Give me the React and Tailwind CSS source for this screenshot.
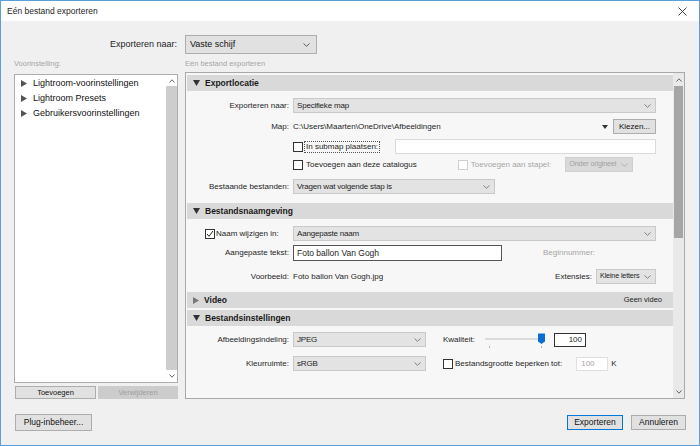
import React from 'react';

const Chevron = ({ color = '#777' }) => (
  <svg width="7" height="4" viewBox="0 0 7 4" className="shrink-0">
    <path d="M0.5 0.5 L3.5 3.3 L6.5 0.5" fill="none" stroke={color} strokeWidth="0.9" />
  </svg>
);

const Down = ({ color = '#333' }) => (
  <svg width="7" height="6" viewBox="0 0 7 6" className="shrink-0">
    <path d="M0 0 H7 L3.5 6 Z" fill={color} />
  </svg>
);

const Right = ({ color = '#555' }) => (
  <svg width="6" height="7" viewBox="0 0 6 7" className="shrink-0">
    <path d="M0 0 V7 L6 3.5 Z" fill={color} />
  </svg>
);

const Select = ({ text, className = '', disabled, small }) => (
  <div
    className={`h-[15px] flex items-center justify-between pl-[3px] pr-[4px] border whitespace-nowrap overflow-hidden ${
      disabled ? 'bg-[#d9d9d9] border-[#d0d0d0] text-[#a3a3a3]' : 'bg-[#e3e3e3] border-[#c9c9c9] text-[#1e1e1e]'
    } ${small ? 'text-[7.3px]' : ''} ${className}`}
  >
    <span className="tracking-[-0.2px]">{text}</span>
    <Chevron color={disabled ? '#b0b0b0' : '#777'} />
  </div>
);

const Checkbox = ({ checked, disabled }) => (
  <div
    className={`w-[10px] h-[10px] shrink-0 bg-white border flex items-center justify-center ${
      disabled ? 'border-[#cfcfcf]' : 'border-[#333]'
    }`}
  >
    {checked && (
      <svg width="8" height="8" viewBox="0 0 8 8">
        <path d="M1 4 L3 6.3 L7 1" fill="none" stroke="#222" strokeWidth="1" />
      </svg>
    )}
  </div>
);

const Header = ({ title, open = true, right }) => (
  <div className="h-[16px] bg-[#d9d9d9] flex items-center pl-[6px] pr-[11px] gap-[5px]">
    {open ? <Down /> : <Right color="#777" />}
    <span className="font-bold text-[8.5px] text-[#1a1a1a]">{title}</span>
    {right && <span className="ml-auto text-[7.5px] text-[#222]">{right}</span>}
  </div>
);

const Label = ({ children }) => (
  <div className="w-[106px] shrink-0 text-right pr-[4px]">{children}</div>
);

const WinButton = ({ children, className = '', disabled }) => (
  <div
    className={`flex items-center justify-center border whitespace-nowrap ${
      disabled ? 'bg-[#cccccc] border-[#cccccc] text-[#a0a0a0]' : 'bg-[#e1e1e1] border-[#adadad] text-[#111]'
    } ${className}`}
  >
    {children}
  </div>
);

export default function App() {
  return (
    <div
      className="w-[700px] h-[446px] border border-[#5b9fd8] bg-[#f0f0f0] flex flex-col text-[#1e1e1e]"
      style={{ fontFamily: '"Liberation Sans", Arial, sans-serif' }}
    >
      {/* title bar */}
      <div className="h-[20px] shrink-0 bg-white flex items-center pl-[6px] pr-[12px] text-[8.5px]">
        <span>Eén bestand exporteren</span>
        <svg width="9" height="9" viewBox="0 0 9 9" className="ml-auto">
          <path d="M0.5 0.5 L8.5 8.5 M8.5 0.5 L0.5 8.5" stroke="#333" strokeWidth="0.9" />
        </svg>
      </div>

      {/* destination */}
      <div className="flex items-center mt-[14px] text-[9px]">
        <div className="w-[176px] text-right">Exporteren naar:</div>
        <WinButton className="ml-[8px] w-[132px] h-[19px] !justify-between pl-[4px] pr-[6px]">
          <span>Vaste schijf</span>
          <Chevron color="#555" />
        </WinButton>
      </div>

      <div className="flex mt-[5px] h-[10px] items-center text-[7.5px] text-[#a6a6a6] pl-[13px] gap-[7px]">
        <div className="w-[164px]">Voorinstelling:</div>
        <div>Eén bestand exporteren</div>
      </div>

      {/* main */}
      <div className="flex h-[327px] mt-[3px] pl-[13px] gap-[7px]">
        {/* presets */}
        <div className="w-[164px] pt-[2px] flex flex-col">
          <div className="h-[309px] bg-white border border-[#adadad] flex">
            <div className="flex-1 pt-[1px] pl-[6px] text-[9px] text-[#111]">
              {['Lightroom-voorinstellingen', 'Lightroom Presets', 'Gebruikersvoorinstellingen'].map((t) => (
                <div key={t} className="h-[15px] flex items-center gap-[6px]">
                  <Right />
                  <span>{t}</span>
                </div>
              ))}
            </div>
            <div className="w-[11px] flex flex-col">
              <div className="h-[11px] flex items-center justify-center">
                <svg width="6" height="4" viewBox="0 0 6 4">
                  <path d="M0.5 3.5 L3 0.8 L5.5 3.5" fill="none" stroke="#555" strokeWidth="0.9" />
                </svg>
              </div>
              <div className="flex-1 bg-[#cdcdcd]" />
              <div className="h-[12px] flex items-center justify-center">
                <svg width="6" height="4" viewBox="0 0 6 4">
                  <path d="M0.5 0.5 L3 3.2 L5.5 0.5" fill="none" stroke="#555" strokeWidth="0.9" />
                </svg>
              </div>
            </div>
          </div>
          <div className="flex gap-[2px] mt-[3px] pl-[1px] text-[7.5px]">
            <WinButton className="w-[81px] h-[13px]">Toevoegen</WinButton>
            <WinButton className="w-[80px] h-[13px]" disabled>
              Verwijderen
            </WinButton>
          </div>
        </div>

        {/* settings panel */}
        <div className="w-[500px] border border-[#a9a9a9] bg-[#f7f7f7] flex text-[8px]">
          <div className="flex-1 pt-[2px] pl-[1px] flex flex-col">
            <Header title="Exportlocatie" />
            <div className="flex flex-col pt-[7px] pb-[9px] pr-[17px]">
              <div className="h-[15px] flex items-center">
                <Label>Exporteren naar:</Label>
                <Select text="Specifieke map" className="flex-1" />
              </div>
              <div className="h-[15px] mt-[6px] flex items-center">
                <Label>Map:</Label>
                <span>C:\Users\Maarten\OneDrive\Afbeeldingen</span>
                <svg width="6" height="4" viewBox="0 0 6 4" className="ml-auto mr-[5px]">
                  <path d="M0 0 H6 L3 4 Z" fill="#333" />
                </svg>
                <WinButton className="w-[43px] h-[15px]">Kiezen...</WinButton>
              </div>
              <div className="h-[15px] mt-[5px] flex items-center">
                <Label />
                <Checkbox />
                <span className="ml-[1px] px-[1px] border border-dotted border-[#555] leading-[10px]">
                  In submap plaatsen:
                </span>
                <div className="ml-[15px] flex-1 h-[15px] bg-white border border-[#dadada]" />
              </div>
              <div className="h-[15px] mt-[3px] flex items-center">
                <Label />
                <Checkbox />
                <span className="ml-[3px]">Toevoegen aan deze catalogus</span>
                <div className="ml-[41px]">
                  <Checkbox disabled />
                </div>
                <span className="ml-[3px] text-[#a6a6a6]">Toevoegen aan stapel:</span>
                <Select text="Onder origineel" disabled small className="ml-[14px] w-[68px]" />
              </div>
              <div className="h-[15px] mt-[7px] flex items-center">
                <Label>Bestaande bestanden:</Label>
                <Select text="Vragen wat volgende stap is" className="w-[202px]" />
              </div>
            </div>

            <Header title="Bestandsnaamgeving" />
            <div className="flex flex-col pt-[7px] pb-[8px] pr-[17px]">
              <div className="h-[15px] flex items-center">
                <div className="w-[106px] shrink-0 flex items-center pl-[18px]">
                  <Checkbox checked />
                  <span className="ml-[1px]">Naam wijzigen in:</span>
                </div>
                <Select text="Aangepaste naam" className="flex-1" />
              </div>
              <div className="h-[16px] mt-[4px] flex items-center">
                <Label>Aangepaste tekst:</Label>
                <div className="w-[209px] h-[16px] bg-white border border-[#555] flex items-center pl-[3px] text-[8.5px]">
                  Foto ballon Van Gogh
                </div>
                <span className="ml-[41px] text-[#a6a6a6]">Beginnummer:</span>
              </div>
              <div className="h-[15px] mt-[8px] flex items-center">
                <Label>Voorbeeld:</Label>
                <span>Foto ballon Van Gogh.jpg</span>
                <span className="ml-auto mr-[4px]">Extensies:</span>
                <Select text="Kleine letters" small className="w-[60px]" />
              </div>
            </div>

            <Header title="Video" open={false} right="Geen video" />
            <div className="h-[2px]" />
            <Header title="Bestandsinstellingen" />
            <div className="flex flex-col pt-[6px] pr-[17px]">
              <div className="h-[15px] flex items-center">
                <Label>Afbeeldingsindeling:</Label>
                <Select text="JPEG" className="w-[133px]" />
                <span className="ml-[17px]">Kwaliteit:</span>
                <svg width="64" height="17" viewBox="0 0 64 17" className="ml-[10px] mt-[4px]">
                  <rect x="0" y="5" width="56" height="2" fill="#dcdcdc" />
                  <path d="M53 0.5 H60 V8.5 L56.5 11 L53 8.5 Z" fill="#0a6fd1" />
                  <rect x="4" y="13" width="1" height="2" fill="#b5b5b5" />
                  <rect x="56" y="13" width="1" height="2" fill="#b5b5b5" />
                </svg>
                <div className="ml-[5px] w-[32px] h-[14px] bg-white border border-[#333] flex items-center justify-end pr-[3px]">
                  100
                </div>
              </div>
              <div className="h-[15px] mt-[9px] flex items-center">
                <Label>Kleurruimte:</Label>
                <Select text="sRGB" className="w-[133px]" />
                <div className="ml-[17px]">
                  <Checkbox />
                </div>
                <span className="ml-[2px]">Bestandsgrootte beperken tot:</span>
                <div className="ml-[14px] w-[32px] h-[14px] bg-white border border-[#e0e0e0] flex items-center pl-[4px] text-[#a6a6a6]">
                  100
                </div>
                <span className="ml-[3px]">K</span>
              </div>
            </div>
          </div>

          {/* panel scrollbar */}
          <div className="w-[11px] flex flex-col bg-[#e9e9e9]">
            <div className="h-[13px] flex items-center justify-center">
              <svg width="6" height="4" viewBox="0 0 6 4">
                <path d="M0.5 3.5 L3 0.8 L5.5 3.5" fill="none" stroke="#555" strokeWidth="0.9" />
              </svg>
            </div>
            <div className="h-[152px] mx-[1px] bg-[#a6a6a6]" />
            <div className="flex-1" />
            <div className="h-[12px] flex items-center justify-center">
              <svg width="6" height="4" viewBox="0 0 6 4">
                <path d="M0.5 0.5 L3 3.2 L5.5 0.5" fill="none" stroke="#555" strokeWidth="0.9" />
              </svg>
            </div>
          </div>
        </div>
      </div>

      {/* footer */}
      <div className="flex items-center mt-[15px] pl-[14px] pr-[13px] text-[8.5px]">
        <WinButton className="w-[77px] h-[17px]">Plug-inbeheer...</WinButton>
        <WinButton className="ml-auto w-[56px] h-[15px] !border-[#0078d7]">Exporteren</WinButton>
        <WinButton className="ml-[8px] w-[55px] h-[15px]">Annuleren</WinButton>
      </div>
    </div>
  );
}
